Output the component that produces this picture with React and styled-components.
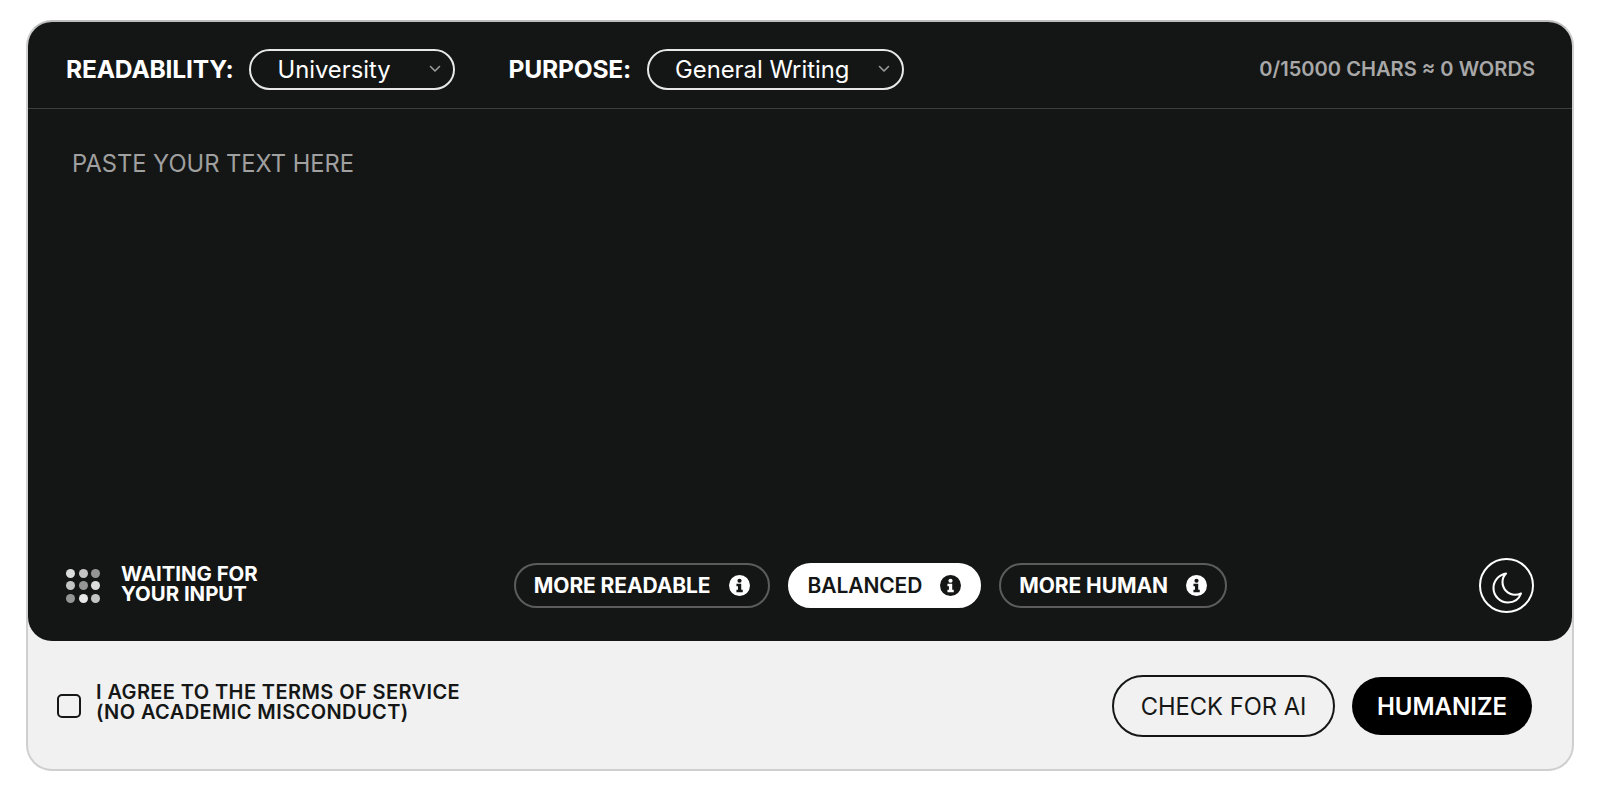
import React from "react";
import styled, { createGlobalStyle } from "styled-components";

const GlobalStyle = createGlobalStyle`
  html, body {
    margin: 0;
    padding: 0;
    background: #ffffff;
    font-family: "Inter", "Liberation Sans", sans-serif;
  }
  * {
    box-sizing: border-box;
  }
`;

const DOTS = [0.85, 0.75, 0.55, 0.75, 0.55, 0.85, 0.55, 0.9, 0.75];

const Chevron = () => (
  <ChevronIcon width="12" height="8" viewBox="0 0 12 8" fill="none">
    <path d="M1.5 1.5 6 6l4.5-4.5" stroke="#9a9a9a" strokeWidth="1.6" strokeLinecap="round" strokeLinejoin="round" />
  </ChevronIcon>
);

const InfoIcon = ({ color, glyph }) => (
  <svg width="21" height="21" viewBox="0 0 22 22">
    <circle cx="11" cy="11" r="11" fill={color} />
    <circle cx="11" cy="6" r="2.2" fill={glyph} />
    <path d="M7.8 9.2h5v6.2h1.6v2.6H7.8v-2.6h1.6v-3.6H7.8z" fill={glyph} />
  </svg>
);

const MoonIcon = () => (
  <svg width="36" height="36" viewBox="0 0 36 36" fill="none">
    <path
      d="M17 5.5C9.5 7 4.5 13 4.5 20c0 8 6.5 14.5 14.5 14.5 6 0 11-3.5 13-9-2 1-3.5 1.3-6 1.3-7 0-12.5-5.8-12.5-12.8 0-3.5 1.5-6.5 3.5-8.5z"
      stroke="#ffffff"
      strokeWidth="2.1"
      strokeLinejoin="round"
    />
  </svg>
);

const Mode = ({ active, children }) => (
  <ModePill $active={active}>
    {children}
    <InfoIcon color={active ? "#141615" : "#ffffff"} glyph={active ? "#ffffff" : "#141615"} />
  </ModePill>
);

const App = () => (
  <>
    <GlobalStyle />
    <Page>
      <Card>
        <Panel>
          <Header>
            <Field>
              <FieldLabel>READABILITY:</FieldLabel>
              <SelectBox $width={206}>
                University
                <Chevron />
              </SelectBox>
            </Field>
            <Field>
              <FieldLabel>PURPOSE:</FieldLabel>
              <SelectBox $width={257}>
                General Writing
                <Chevron />
              </SelectBox>
            </Field>
            <Counter>0/15000 CHARS ≈ 0 WORDS</Counter>
          </Header>
          <TextInput placeholder="PASTE YOUR TEXT HERE" />
          <PanelFooter>
            <Status>
              <DotGrid>
                {DOTS.map((opacity, i) => (
                  <Dot key={i} style={{ opacity }} />
                ))}
              </DotGrid>
              <StatusText>
                WAITING FOR
                <br />
                YOUR INPUT
              </StatusText>
            </Status>
            <Modes>
              <Mode>MORE READABLE</Mode>
              <Mode active>BALANCED</Mode>
              <Mode>MORE HUMAN</Mode>
            </Modes>
            <ThemeToggle>
              <MoonIcon />
            </ThemeToggle>
          </PanelFooter>
        </Panel>
        <Actions>
          <Agreement>
            <CheckBox />
            <AgreementText>
              I AGREE TO THE TERMS OF SERVICE
              <br />
              (NO ACADEMIC MISCONDUCT)
            </AgreementText>
          </Agreement>
          <Buttons>
            <CheckButton>CHECK FOR AI</CheckButton>
            <HumanizeButton>HUMANIZE</HumanizeButton>
          </Buttons>
        </Actions>
      </Card>
    </Page>
  </>
);

export default App;

const Page = styled.div`
  padding: 20px 26px 28px;
  background: #ffffff;
`;

const Card = styled.div`
  display: flex;
  flex-direction: column;
  height: 751px;
  background: #f1f1f1;
  border: 2px solid #cfcfcf;
  border-top-color: #bdbdbd;
  border-radius: 26px;
  overflow: hidden;
`;

const Panel = styled.div`
  display: flex;
  flex-direction: column;
  height: 619px;
  background: #141615;
  border-radius: 0 0 24px 24px;
`;

const Header = styled.div`
  display: flex;
  align-items: center;
  height: 87px;
  padding: 8px 37px 0 38px;
  border-bottom: 1px solid #3d3f3e;
  flex-shrink: 0;
`;

const Field = styled.div`
  display: flex;
  align-items: center;
  gap: 16px;
  margin-right: 53px;
`;

const FieldLabel = styled.div`
  font-size: 24.6px;
  font-weight: 700;
  letter-spacing: -0.2px;
  color: #ffffff;
`;

const SelectBox = styled.div`
  display: flex;
  align-items: center;
  justify-content: space-between;
  width: ${(p) => p.$width}px;
  height: 41px;
  padding: 0 12px 0 26px;
  border: 2px solid #e8e8e8;
  border-radius: 21px;
  font-size: 23.8px;
  color: #ffffff;
`;

const ChevronIcon = styled.svg`
  flex-shrink: 0;
`;

const Counter = styled.div`
  margin-left: auto;
  font-size: 20.1px;
  font-weight: 600;
  color: #a8a8a8;
`;

const TextInput = styled.textarea`
  flex: 1;
  padding: 40px 44px;
  background: transparent;
  border: none;
  outline: none;
  resize: none;
  font-family: inherit;
  font-size: 23.7px;
  color: #ffffff;

  &::placeholder {
    color: #a0a0a0;
    opacity: 1;
  }
`;

const PanelFooter = styled.div`
  display: flex;
  align-items: center;
  justify-content: space-between;
  padding: 0 38px 28px 38px;
`;

const Status = styled.div`
  display: flex;
  align-items: center;
  gap: 21px;
`;

const DotGrid = styled.div`
  display: grid;
  grid-template-columns: repeat(3, 9px);
  gap: 3.5px;
`;

const Dot = styled.div`
  width: 9px;
  height: 9px;
  border-radius: 50%;
  background: #ffffff;
`;

const StatusText = styled.div`
  padding: 0 4px 3px 0;
  font-size: 20.4px;
  line-height: 20.5px;
  font-weight: 700;
  color: #ffffff;
`;

const Modes = styled.div`
  display: flex;
  align-items: center;
  gap: 18px;
`;

const ModePill = styled.div`
  display: flex;
  align-items: center;
  gap: 18px;
  height: 45px;
  padding: 0 18px;
  border: 2px solid ${(p) => (p.$active ? "#ffffff" : "#5c5c5c")};
  border-radius: 23px;
  background: ${(p) => (p.$active ? "#ffffff" : "transparent")};
  font-size: 21px;
  font-weight: ${(p) => (p.$active ? 600 : 700)};
  letter-spacing: -0.1px;
  color: ${(p) => (p.$active ? "#141615" : "#ffffff")};
`;

const ThemeToggle = styled.div`
  display: flex;
  align-items: center;
  justify-content: center;
  width: 55px;
  height: 55px;
  border: 2px solid #ffffff;
  border-radius: 50%;
`;

const Actions = styled.div`
  flex: 1;
  display: flex;
  align-items: center;
  justify-content: space-between;
  padding: 2px 40px 0 29px;
`;

const Agreement = styled.div`
  display: flex;
  align-items: center;
  gap: 15px;
`;

const CheckBox = styled.div`
  width: 24px;
  height: 24px;
  border: 2px solid #151716;
  border-radius: 5px;
`;

const AgreementText = styled.div`
  padding-bottom: 8px;
  font-size: 20px;
  line-height: 20.5px;
  font-weight: 600;
  letter-spacing: 0.4px;
  color: #151716;
`;

const Buttons = styled.div`
  display: flex;
  align-items: center;
  gap: 17px;
`;

const CheckButton = styled.div`
  display: flex;
  align-items: center;
  justify-content: center;
  width: 223px;
  height: 62px;
  border: 2px solid #151716;
  border-radius: 31px;
  font-size: 23.7px;
  color: #151716;
`;

const HumanizeButton = styled.div`
  display: flex;
  align-items: center;
  justify-content: center;
  width: 180px;
  height: 58px;
  border-radius: 29px;
  background: #000000;
  font-size: 24px;
  font-weight: 600;
  color: #ffffff;
`;
